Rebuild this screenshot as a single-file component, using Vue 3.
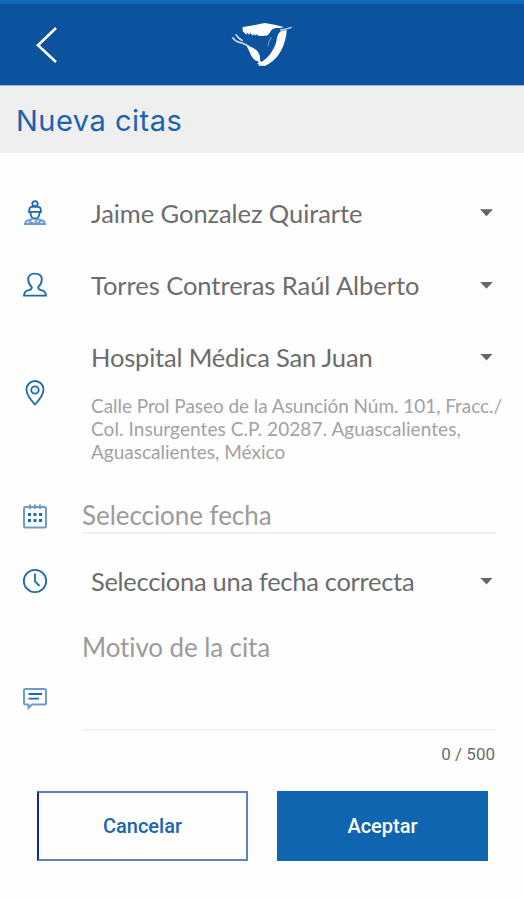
<script setup>
import { ref } from 'vue'

const patient = ref('Jaime Gonzalez Quirarte')
const doctor = ref('Torres Contreras Raúl Alberto')
const hospital = ref('Hospital Médica San Juan')
const address = [
  'Calle Prol Paseo de la Asunción Núm. 101, Fracc./',
  'Col. Insurgentes C.P. 20287. Aguascalientes,',
  'Aguascalientes, México',
]
</script>

<template>
  <div class="screen">
    <header class="bar">
      <svg class="back" width="24" height="40" viewBox="0 0 24 40">
        <path d="M21 3 3 20.300 21 37" />
      </svg>
      <svg class="logo" width="80" height="65" viewBox="0 0 240 195">
        <path class="solid" d="M62 51Q96 46 129 39Q158 44 186 51Q176 55 168 54Q152 53 147 62Q142 71 137 76Q123 80 109 77L104 72L102 77L96 72L93 77L85 69L82 74L75 68L73 74L62 63Z" />
        <path class="solid" d="M194 60Q193 92 177 122Q160 153 130 167L109 167L112 163L104 162L111 158L107 154Q90 148 83 126L74 108Q92 109 107 124Q116 136 114 153L120 155Q139 143 150 124Q163 104 164 88Q167 69 178 63Z" />
        <path class="beak" d="M174 60Q190 58 209 52" />
        <path class="feather" d="M31 82Q41 97 61 99L83 110M41 73Q48 85 62 92" />
        <path class="fold" d="M148 81Q138 97 138 108" />
      </svg>
    </header>
    <h1 class="title"><span class="tx-title">Nueva citas</span></h1>

    <main class="form">
      <div class="row">
        <div class="icon">
          <svg width="24" height="28" viewBox="0 0 24 28">
            <circle cx="12" cy="4.800" r="2.700" />
            <path d="M6.500 9.500Q7 7.500 12 7.500T17.500 9.500L18 12.800H6ZM7.300 13Q7.500 17.500 10 19.500H14Q16.500 17.500 16.700 13" />
            <path class="mid" d="M9.500 19Q9 21 5.500 21.300Q2.500 21.800 2 25H22Q21.500 21.800 18.500 21.300Q15 21 14.500 19M6 22.500 10 24.500M14 19.500 12 24.500M18 22 14 24.500" />
          </svg>
        </div>
        <div class="select"><span class="tx-patient">{{ patient }}</span><i class="caret"></i></div>
      </div>

      <div class="row">
        <div class="icon">
          <svg width="26" height="28" viewBox="0 0 26 28">
            <path d="M9.800 16.200Q6.200 12.500 6.200 8.500Q6.200 2.600 13 2.600T19.800 8.500Q19.800 12.500 16.200 16.200Q16 18.500 19 19.200Q24 20.200 24 24.700H2Q2 20.200 7 19.200Q10 18.500 9.800 16.200Z" />
          </svg>
        </div>
        <div class="select"><span class="tx-doctor">{{ doctor }}</span><i class="caret"></i></div>
      </div>

      <div class="row place">
        <div class="icon">
          <svg width="22" height="28" viewBox="0 0 22 28">
            <path d="M11 25.500Q2.500 16.500 2.500 10.500A8.500 8.500 0 0 1 19.500 10.500Q19.500 16.500 11 25.500Z" />
            <circle cx="11" cy="11" r="3.700" />
          </svg>
        </div>
        <div class="stack">
          <div class="select"><span class="tx-hospital">{{ hospital }}</span><i class="caret"></i></div>
          <p class="address">
            <span v-for="(line, i) in address" :key="line" class="line" :class="'line-' + i">{{ line }}</span>
          </p>
        </div>
      </div>

      <div class="row date">
        <div class="icon">
          <svg width="26" height="28" viewBox="0 0 26 28">
            <rect class="mid" x="2" y="5" width="22" height="20.500" rx="1.500" />
            <path class="mid" d="M8 2.500V7M13 2.500V7M18 2.500V7" />
            <path class="dots" d="M6 12.500H9M11.500 12.500H14.500M17 12.500H20M6 18.500H9M11.500 18.500H14.500M17 18.500H20" />
          </svg>
        </div>
        <div class="input"><span class="tx-date">Seleccione fecha</span></div>
      </div>

      <div class="row time">
        <div class="icon">
          <svg width="26" height="26" viewBox="0 0 26 26">
            <circle cx="13" cy="13" r="11.200" />
            <path d="M13 5.500V13.500L17.500 18" />
          </svg>
        </div>
        <div class="select"><span class="tx-time">Selecciona una fecha correcta</span><i class="caret"></i></div>
      </div>

      <div class="row reason">
        <div class="icon">
          <svg width="26" height="24" viewBox="0 0 26 24">
            <path class="mid" d="M3.500 3H22.500Q24 3 24 4.500V17Q24 18.500 22.500 18.500H10L6.500 22V18.500H3.500Q2 18.500 2 17V4.500Q2 3 3.500 3Z" />
            <path d="M6.500 8H20M6.500 12.600H17" />
          </svg>
        </div>
        <div class="input"><span class="tx-reason">Motivo de la cita</span></div>
      </div>
      <div class="counter"><span class="tx-counter">0 / 500</span></div>

      <div class="actions">
        <button class="btn cancel"><span class="tx-cancel">Cancelar</span></button>
        <button class="btn accept"><span class="tx-accept">Aceptar</span></button>
      </div>
    </main>
  </div>
</template>

<style>
body {
  margin: 0;
  background: #fefefe;
}
</style>

<style scoped>
.screen {
  width: 524px;
  height: 900px;
  overflow: hidden;
  background: #fefefe;
  font-family: Lato, "Liberation Sans", sans-serif;
  font-variant-ligatures: none;
  color: #6c6c6c;
}
.screen span {
  white-space: nowrap;
}
.bar {
  display: grid;
  grid-template-columns: 222px 80px 1fr;
  align-items: start;
  box-sizing: border-box;
  height: 86px;
  padding-top: 6px;
  border-top: 4px solid #106bbd;
  border-bottom: 1px solid #9db4d6;
  background: #0b539e;
}
.back {
  margin: 15px 0 0 35px;
  fill: none;
  stroke: #fff;
  stroke-width: 2.6;
}
.solid {
  fill: #fff;
}
.feather {
  fill: none;
  stroke: #c9dbef;
  stroke-width: 5;
}
.beak {
  fill: none;
  stroke: #c9dbef;
  stroke-width: 4;
}
.fold {
  fill: none;
  stroke: #7da3cf;
  stroke-width: 3;
}
.title {
  box-sizing: border-box;
  height: 67px;
  margin: 0;
  padding-left: 16px;
  background: #efefef;
  color: #1b63ae;
  font: 400 29px/70px Inter, sans-serif;
  letter-spacing: 0.5px;
}
.form {
  padding-top: 23.5px;
}
.row {
  display: grid;
  grid-template-columns: 82px 1fr;
  align-items: center;
  height: 72.5px;
}
.icon {
  display: flex;
  justify-content: center;
  width: 70px;
}
.icon svg {
  fill: none;
  stroke: #1d68ae;
  stroke-width: 1.8;
}
.icon .mid {
  stroke: #6c9bd0;
  stroke-width: 2;
}
.icon .dots {
  stroke-width: 3;
}
.select {
  display: flex;
  align-items: center;
  justify-content: space-between;
  height: 71px;
  padding: 0 31px 0 9px;
  font-size: 25.5px;
}
.tx-patient {
  letter-spacing: -0.07px;
}
.tx-doctor {
  letter-spacing: -0.04px;
}
.tx-hospital {
  letter-spacing: -0.18px;
}
.tx-time {
  letter-spacing: -0.3px;
}
.caret {
  width: 13px;
  height: 7px;
  background: #666;
  clip-path: polygon(0 0, 100% 0, 50% 100%);
}
.place {
  height: 142px;
}
.address {
  margin: 0;
  padding: 1px 0 0 9px;
  color: #a2a2a2;
  font-size: 19px;
  line-height: 23.3px;
}
.line {
  display: block;
}
.line-0 {
  letter-spacing: -0.05px;
}
.line-1 {
  letter-spacing: 0.07px;
}
.input {
  box-sizing: border-box;
  width: 414px;
  height: 100%;
  border-bottom: 2px solid #f1f1f1;
  color: #9b9b9b;
  font-size: 26px;
  line-height: 34px;
}
.tx-date {
  letter-spacing: -0.05px;
}
.tx-reason {
  letter-spacing: -0.1px;
}
.date {
  height: 36px;
  margin-top: 34px;
}
.time {
  height: 64px;
  margin-top: 15.5px;
}
.time .select {
  height: 64px;
}
.reason {
  height: 101px;
  margin-top: 17px;
}
.reason .icon {
  padding-top: 34px;
}
.counter {
  padding: 13px 29px 0 0;
  font: 400 17px/20px Roboto, sans-serif;
  text-align: right;
}
.actions {
  display: grid;
  grid-template-columns: 211px 211px;
  gap: 29px;
  padding: 27px 0 0 37px;
}
.btn {
  height: 70px;
  padding: 0;
  border: 2px solid #0f65b0;
  border-radius: 0;
  font: 500 20px/24px Roboto, sans-serif;
}
.cancel {
  border-color: #5c83bd;
  border-left-color: #1029a0;
  background: #fefefe;
  color: #1b65b0;
}
.accept {
  background: #0f65b0;
  color: #fff;
}
</style>
